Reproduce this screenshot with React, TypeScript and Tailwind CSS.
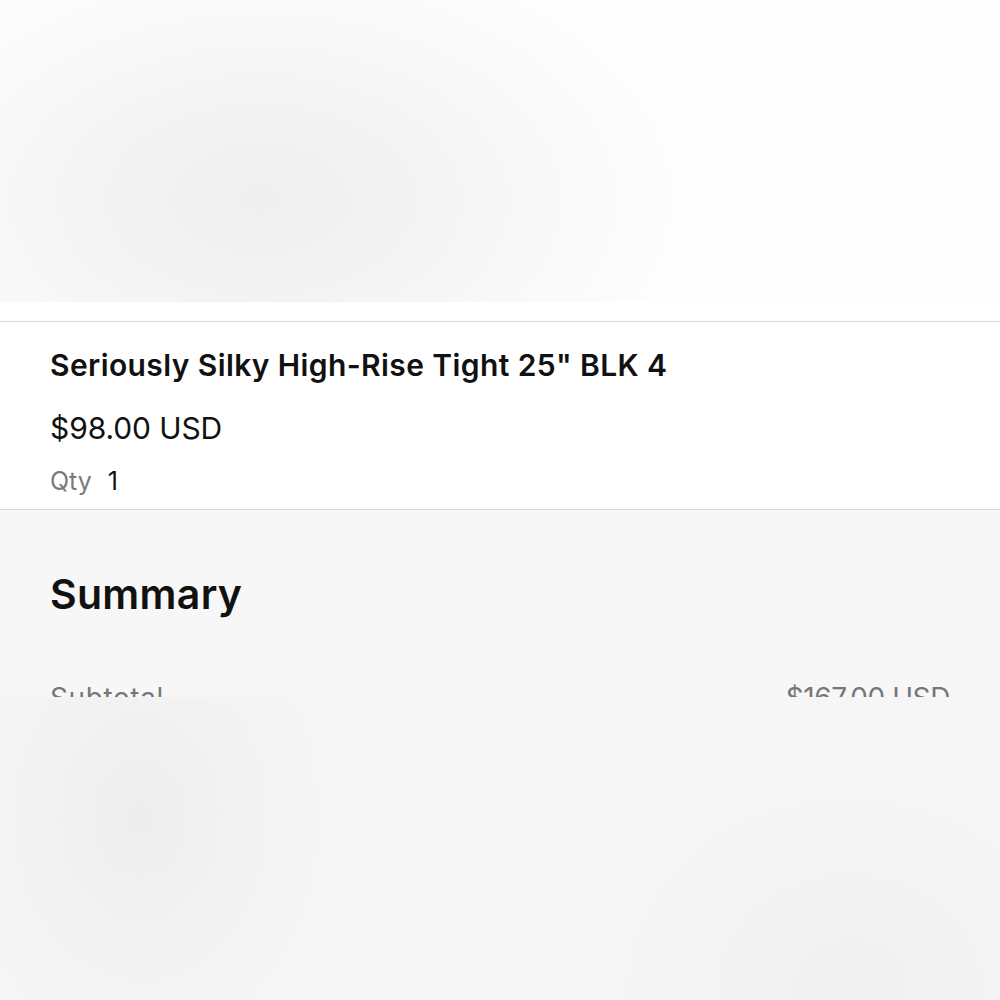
export default function App() {
  return (
    <div className="relative min-h-screen bg-[#f7f7f7] font-['Inter','Liberation_Sans',sans-serif] text-[#111]">
      {/* product image slot */}
      <div className="h-[322px] border-b border-[#d6d6d6] bg-white" />

      <section className="border-b border-[#d6d6d6] bg-white px-[50px] pb-[11px] pt-[23px]">
        <h2 className="text-[30px] font-semibold leading-[40px] tracking-[0.4px]">
          Seriously Silky High-Rise Tight 25" BLK 4
        </h2>
        <p className="mt-[23px] text-[30px] leading-[40px] tracking-[-0.1px]">$98.00 USD</p>
        <p className="mt-[16px] flex gap-[16px] text-[25px] leading-[34px]">
          <span className="text-[#7a7a7a]">Qty</span>
          <span>1</span>
        </p>
      </section>

      <section className="px-[50px] pt-[59px]">
        <h2 className="text-[41px] font-semibold leading-[50px] tracking-[0.3px]">Summary</h2>
        <div className="mt-[62px] flex justify-between text-[28px] leading-[34px] text-[#777]">
          <span className="tracking-[0.6px]">Subtotal</span>
          <span className="tracking-[-0.4px]">$167.00 USD</span>
        </div>
      </section>

      {/* soft masks over the image and the rest of the summary */}
      <div className="absolute inset-x-0 top-0 h-[302px] bg-[#fdfdfd] bg-[radial-gradient(ellipse_420px_260px_at_260px_200px,#efefef_0%,#f3f3f3_35%,#f8f8f8_65%,rgba(253,253,253,0)_100%)]" />
      <div className="absolute inset-x-0 top-[697px] h-[303px] bg-[#f6f6f6] bg-[radial-gradient(ellipse_200px_260px_at_140px_120px,#ededed_0%,#f2f2f2_45%,rgba(246,246,246,0)_100%),radial-gradient(ellipse_260px_220px_at_850px_290px,#f0f0f0_0%,#f3f3f3_45%,rgba(246,246,246,0)_100%)]" />
    </div>
  );
}
